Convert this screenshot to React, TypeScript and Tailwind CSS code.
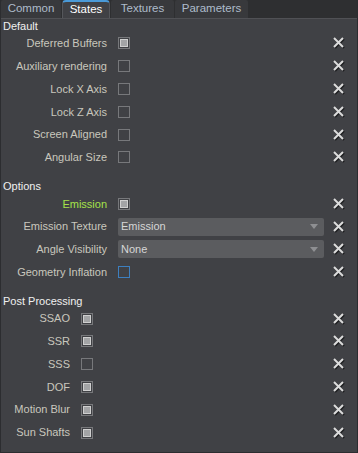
import { FC } from "react";

type Row =
  | { kind: "check"; label: string; checked: boolean; accent?: boolean; focus?: boolean }
  | { kind: "select"; label: string; value: string };

const defaultRows: Row[] = [
  { kind: "check", label: "Deferred Buffers", checked: true },
  { kind: "check", label: "Auxiliary rendering", checked: false },
  { kind: "check", label: "Lock X Axis", checked: false },
  { kind: "check", label: "Lock Z Axis", checked: false },
  { kind: "check", label: "Screen Aligned", checked: false },
  { kind: "check", label: "Angular Size", checked: false },
];

const optionRows: Row[] = [
  { kind: "check", label: "Emission", checked: true, accent: true },
  { kind: "select", label: "Emission Texture", value: "Emission" },
  { kind: "select", label: "Angle Visibility", value: "None" },
  { kind: "check", label: "Geometry Inflation", checked: false, focus: true },
];

const postRows: Row[] = [
  { kind: "check", label: "SSAO", checked: true },
  { kind: "check", label: "SSR", checked: true },
  { kind: "check", label: "SSS", checked: false },
  { kind: "check", label: "DOF", checked: true },
  { kind: "check", label: "Motion Blur", checked: true },
  { kind: "check", label: "Sun Shafts", checked: true },
];

const tabs = [
  { name: "Common", w: "w-[60px]" },
  { name: "States", w: "w-[48px]" },
  { name: "Textures", w: "w-[63px]" },
  { name: "Parameters", w: "w-[73px]" },
];

const ClearIcon: FC = () => (
  <svg width="14" height="14" viewBox="0 0 14 14">
    <path d="M3 3 L12 12 M12 3 L3 12" stroke="#1e1f21" strokeWidth="2.2" />
    <path d="M2 2 L11 11 M11 2 L2 11" stroke="#dcdcdc" strokeWidth="2" />
  </svg>
);

const Checkbox: FC<{ checked: boolean; focus?: boolean }> = ({ checked, focus }) => (
  <div
    className={`w-[12px] h-[12px] border flex items-center justify-center ${
      focus ? "border-[#3d7fbf]" : "border-[#77787b]"
    }`}
  >
    {checked && <div className="w-[8px] h-[8px] bg-[#a3a4a6] border border-[#cfcfcf]" />}
  </div>
);

const Select: FC<{ value: string }> = ({ value }) => (
  <div className="w-[206px] h-[18px] rounded-[2px] bg-[#5b5c5f] flex items-center justify-between pl-[3px] pr-[6px] text-[#d6d6d6]">
    <span>{value}</span>
    <svg width="8" height="5" viewBox="0 0 8 5">
      <path d="M0 0 H8 L4 5 Z" fill="#8e8f92" />
    </svg>
  </div>
);

const Section: FC<{ title: string; rows: Row[]; labelWidth: string }> = ({ title, rows, labelWidth }) => (
  <div className="flex flex-col">
    <div className="h-[12px] leading-[12px] pl-[2px] text-[#f0f0f0]">{title}</div>
    {rows.map((row) => (
      <div key={row.label} className="h-[22.8px] flex items-center">
        <div
          className={`${labelWidth} shrink-0 text-right pr-[11px] ${
            row.kind === "check" && row.accent ? "text-[#a6e14a]" : "text-[#c9c7bd]"
          }`}
        >
          {row.label}
        </div>
        <div className="flex-1">
          {row.kind === "check" ? (
            <Checkbox checked={row.checked} focus={row.focus} />
          ) : (
            <Select value={row.value} />
          )}
        </div>
        <div className="w-[14px] mr-[11px] flex items-center">
          <ClearIcon />
        </div>
      </div>
    ))}
  </div>
);

export default function App() {
  return (
    <div
      className="w-[358px] h-[453px] bg-[#404145] text-[11px] flex flex-col border-l border-b border-r border-[#2c2d30]"
      style={{ fontFamily: "'Liberation Sans', Arial, sans-serif" }}
    >
      <div className="h-[19px] bg-[#2e2f31] flex items-end gap-[1px] shrink-0 border-b border-[#505155]">
        {tabs.map((t) => (
          <div
            key={t.name}
            className={`${t.w} h-[18px] flex items-center justify-center text-[11.5px] ${
              t.name === "States"
                ? "bg-[#404145] text-white border-t-2 border-x border-[#4a9ad8] border-x-[#55575b] rounded-t-[4px]"
                : "bg-[#38393c] text-[#aebccb] rounded-t-[2px]"
            }`}
          >
            {t.name}
          </div>
        ))}
      </div>
      <div className="flex flex-col pt-[1px]">
        <Section title="Default" rows={defaultRows} labelWidth="w-[117px]" />
        <div className="h-[11.6px]" />
        <Section title="Options" rows={optionRows} labelWidth="w-[117px]" />
        <div className="h-[11.6px]" />
        <Section title="Post Processing" rows={postRows} labelWidth="w-[80px]" />
      </div>
    </div>
  );
}
